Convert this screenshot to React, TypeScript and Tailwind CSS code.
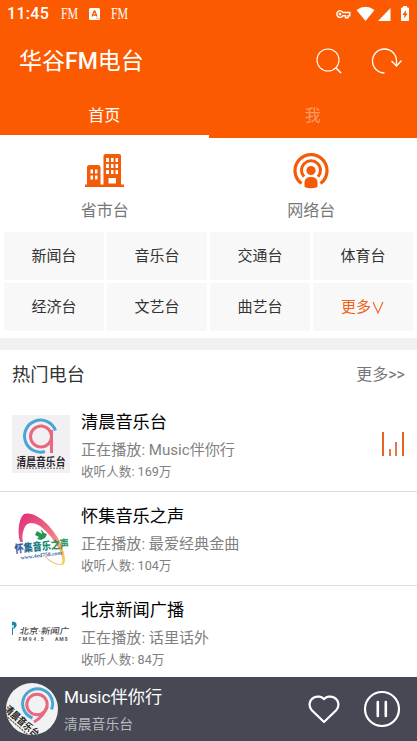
const categories = ["新闻台", "音乐台", "交通台", "体育台", "经济台", "文艺台", "曲艺台", "更多"]

const stations = [
  { name: "清晨音乐台", playing: "Music伴你行", listeners: "169万", logo: <MorningLogo />, active: true },
  { name: "怀集音乐之声", playing: "最爱经典金曲", listeners: "104万", logo: <HuaijiLogo />, active: false },
  { name: "北京新闻广播", playing: "话里话外", listeners: "84万", logo: <BeijingLogo />, active: false },
]

function MorningLogo() {
  return (
    <svg viewBox="0 0 58 58" className="h-[58px] w-[58px]">
      <rect width="58" height="58" fill="#f3f0f4" />
      <path d="M43.5 15.5A16 16 0 1 0 33 36.5" fill="none" stroke="#49a5d4" strokeWidth="3" />
      <circle cx="29" cy="21.5" r="10.5" fill="none" stroke="#e7687f" strokeWidth="3" />
      <path d="M39.5 15v23" stroke="#e7687f" strokeWidth="3" />
      <g transform="translate(4.5 51) scale(1 1.15)">
        <text fontSize="9.8" fontWeight="700" fill="#292529">
          清晨音乐台
        </text>
      </g>
      <path d="M5 53.2h48" stroke="#5c575c" strokeWidth="1" strokeDasharray="2 1" />
    </svg>
  )
}

function HuaijiLogo() {
  return (
    <svg viewBox="0 0 58 58" className="h-[58px] w-[58px]">
      <defs>
        <linearGradient id="swoosh" x1="0" y1="0" x2="1" y2="1">
          <stop offset="0" stopColor="#dd2b79" />
          <stop offset=".55" stopColor="#ef7687" />
          <stop offset="1" stopColor="#f5dc4e" />
        </linearGradient>
        <linearGradient id="name" x1="0" y1="0" x2="1" y2="0">
          <stop offset="0" stopColor="#3d55a8" />
          <stop offset=".5" stopColor="#168579" />
          <stop offset="1" stopColor="#3b9c50" />
        </linearGradient>
      </defs>
      <path
        d="M8 33C5 22 7 9 12 5C24 1 42 19 49 35C54 48 55 57 48 56C42 56 35 51 31 45C39 53 47 57 50 54C53 47 41 27 28 17C20 12 14 13 12 20C10 25 10 29 11 33Z"
        fill="url(#swoosh)"
      />
      <path d="M25 22l5 3-1-5 3 4 3 1-2 4-4 2-4-1 2-2-4-2z" fill="#239552" />
      <g transform="translate(3 44) rotate(-6) scale(1 1.2)">
        <text fontSize="9.1" fontWeight="900" fill="url(#name)">
          怀集音乐之声
        </text>
      </g>
      <g transform="translate(9 50.500) rotate(-7)">
        <text fontSize="5.600" fontFamily="Liberation Serif" fontWeight="700" fill="#3e64a3">
          www.4ed758.com
        </text>
      </g>
    </svg>
  )
}

function BeijingLogo() {
  return (
    <svg viewBox="0 0 58 58" className="h-[58px] w-[58px]">
      <path d="M0 19c5-1 6 4 3 6l-2 1v6H0z" fill="#1588a7" />
      <path d="M0 22h2v3H0z" fill="#a5dce6" />
      <g transform="translate(7 31) skewX(-10) scale(1 .9)">
        <text fontSize="9.400" fontWeight="500" fill="#4b4a4e">
          北京·新闻广
        </text>
      </g>
      <text x="6.500" y="38" fontSize="5" fontWeight="700" letterSpacing="1.600" fill="#555">
        FM94.5
      </text>
      <text x="43" y="38" fontSize="5" fontWeight="700" letterSpacing="1" fill="#555">
        AM8
      </text>
    </svg>
  )
}

function PlayerAvatar() {
  return (
    <svg viewBox="0 0 52 52" className="h-[52px] w-[52px] rounded-full">
      <rect width="52" height="52" fill="#f2f2f3" />
      <path d="M45.500 26.500A15 15 0 1 0 26.500 35" fill="none" stroke="#49a5d4" strokeWidth="3" />
      <circle cx="31" cy="21.500" r="10.200" fill="none" stroke="#e7687f" strokeWidth="3" />
      <path d="M41 23.500Q38 33 28 39" fill="none" stroke="#e7687f" strokeWidth="3" />
      <g transform="translate(0 24.500) rotate(41) scale(1 1.200)">
        <text fontSize="8.400" fontWeight="700" fill="#211f21" y="3">
          清晨音乐台
        </text>
        <path d="M2 5.200h38" stroke="#555" strokeWidth="1" strokeDasharray="2 1" />
      </g>
    </svg>
  )
}

function StatusBar() {
  return (
    <div className="flex h-7 items-center pr-2 pl-[7px]">
      <span className="w-[54px] text-[16px] leading-none font-medium tracking-[.3px]">11:45</span>
      <span className="w-[28px] origin-left scale-x-[.72] font-['Liberation_Serif',serif] text-[16.5px] leading-none">FM</span>
      <svg viewBox="0 0 11 12" className="h-3 w-[11px]">
        <rect width="11" height="12" rx="1.5" fill="#fff" />
        <path d="M3 8.5 5.2 3h.6L8 8.5M3.8 7h3.4" fill="none" stroke="#fa5b00" strokeWidth="1.3" />
        <path d="M7.5 10.3h2" stroke="#fa5b00" strokeWidth=".7" />
      </svg>
      <span className="ml-[11px] origin-left scale-x-[.72] font-['Liberation_Serif',serif] text-[16.5px] leading-none">FM</span>
      <svg viewBox="0 0 74 16" className="ml-auto h-4 w-[74px]" fill="#fff">
        <g fill="none" stroke="#fff" strokeWidth="1.4">
          <path d="M8 6.500A3.300 3.300 0 1 0 8 9.700H10.500v2h2.500v-2h1.800V6.500z" />
          <circle cx="5" cy="8.100" r=".7" />
        </g>
        <path d="M21.500 4Q30.500-2.300 39.500 4L30.500 15z" />
        <path d="M55.500 2v13H43z" />
        <path d="M68 0h4v1.500h1q1 0 1 1V14q0 1-1 1h-6q-1 0-1-1V2.500q0-1 1-1h1z" />
        <path d="M70.800 4v3.500h1.800L69.300 12.500V9h-1.800z" fill="#fa5b00" />
      </svg>
    </div>
  )
}

export default function App() {
  return (
    <div className="flex h-[741px] w-[417px] flex-col overflow-hidden bg-white font-[Roboto,'Noto_Sans_CJK_SC',sans-serif] whitespace-nowrap">
      <header className="h-[138px] shrink-0 bg-[#fb5a00] text-white">
        <StatusBar />
        <div className="flex h-[66px] items-center pl-[19px]">
          <h1 className="text-[23px] leading-none">
            华谷<span className="font-medium">FM</span>电台
          </h1>
          <svg viewBox="0 0 26 26" className="mr-[29px] ml-auto h-[26px] w-[26px]" fill="none" stroke="#fff">
            <circle cx="12" cy="12" r="11" strokeWidth="1.1" />
            <path d="m19.500 19.500 5.500 5.500" strokeWidth="1.7" />
          </svg>
          <svg viewBox="0 0 31 26" className="mr-[15px] h-[26px] w-[31px]" fill="none" stroke="#fff" strokeWidth="1.3">
            <path d="M13.500 25A12 12 0 1 1 25.500 13v4.500" />
            <path d="m20.500 13 5 5 5-5.500" />
          </svg>
        </div>
        <nav className="grid h-11 grid-cols-2 text-center text-[16px] leading-[43px]">
          <div className="h-[44px] border-b-[3px] border-white">首页</div>
          <div className="text-[#ff9b66]">我</div>
        </nav>
      </header>

      <section className="grid h-[93px] shrink-0 grid-cols-2 text-[16px] text-[#777]">
        <div className="flex flex-col items-center pt-4 pl-px">
          <svg viewBox="0 0 39 34" className="h-[34px] w-[39px]" fill="#f45b08">
            <path d="M0 30.500h2V13.500Q2 11 4.500 11H13q2.500 0 2.500 2.500v17h3V2Q18.500 0 20.500 0H34q2 0 2 2v28.500h3V33H0z" />
            <path
              d="M5.500 15.500H8v4H5.500zM10 15.500h2.500v4H10zM5.500 21.500H8v4H5.500zM10 21.500h2.500v4H10zM21 4h3v4h-3zM26 4h2.500v4H26zM30.500 4H33v4h-2.500zM21 10h3v4h-3zM26 10h2.500v4H26zM30.500 10H33v4h-2.500zM21 16h3v4h-3zM26 16h2.500v4H26zM30.500 16H33v4h-2.500zM23.500 24h7.500v5.500h-7.500z"
              fill="#fff"
            />
          </svg>
          <span className="mt-[11px] leading-6">省市台</span>
        </div>
        <div className="flex flex-col items-center pt-[15px] pr-[3px]">
          <svg viewBox="0 0 36 36" className="h-[36px] w-[36px]" fill="none" stroke="#f45b08">
            <path d="M8.500 30.500A16 16 0 1 1 27.500 30.500" strokeWidth="3.200" />
            <path d="M11 23.700A9.500 9.500 0 1 1 25 23.700" strokeWidth="3" />
            <circle cx="18" cy="17.500" r="4.600" fill="#f45b08" stroke="none" />
            <path d="M11.500 34v-4.500q0-5.500 6.500-5.500t6.500 5.500v4.500q-6.500 2.500-13 0z" fill="#f45b08" stroke="none" />
          </svg>
          <span className="mt-[10px] leading-6">网络台</span>
        </div>
      </section>

      <section className="grid h-[107px] shrink-0 grid-cols-4 content-start gap-[3px] px-1 pt-[.5px]">
        {categories.map((label) => (
          <div
            key={label}
            className={`flex h-[48px] items-center justify-center bg-[#f8f8f8] pt-0.5 text-[15px] ${label === "更多" ? "text-[#ee6319]" : "text-[#333]"}`}
          >
            {label}
            {label === "更多" && (
              <svg viewBox="0 0 14 14" className="h-[14px] w-[14px]" fill="none" stroke="currentColor" strokeWidth="1.100">
                <path d="m2 1 5 11 5-11" />
              </svg>
            )}
          </div>
        ))}
      </section>
      <div className="h-3 shrink-0 bg-[#f1f1f1]" />

      <div className="flex h-[48px] shrink-0 items-center justify-between px-3 pt-px">
        <h2 className="text-[18.300px] text-[#333]">热门电台</h2>
        <span className="text-[16px] text-[#777]">更多&gt;&gt;</span>
      </div>

      <main className="min-h-0 flex-1 overflow-hidden">
        {stations.map((s) => (
          <div key={s.name} className="flex h-[94.200px] border-b border-[#dedede] pt-[11px] pr-[13px] pl-3">
            <div className="mt-[6px] h-[58px] w-[58px]">{s.logo}</div>
            <div className="ml-[11px] flex-1">
              <h3 className="text-[17.200px] leading-[26px] text-black">{s.name}</h3>
              <p className="mt-[3px] text-[15.100px] leading-6 text-[#808080]">正在播放: {s.playing}</p>
              <p className="mt-px text-[12.600px] leading-[18px] text-[#808080]">收听人数: {s.listeners}</p>
            </div>
            {s.active && (
              <div className="mt-[23px] flex h-6 items-end gap-[4.700px]">
                <i className="h-6 w-0.5 bg-[#e96525]" />
                <i className="h-[7px] w-0.5 bg-[#e07a48]" />
                <i className="h-[14px] w-0.5 bg-[#e07a48]" />
                <i className="h-6 w-0.5 bg-[#e96525]" />
              </div>
            )}
          </div>
        ))}
      </main>

      <footer className="flex h-16 shrink-0 items-center bg-[#464853] pr-4 pl-1.5">
        <PlayerAvatar />
        <div className="ml-1.5 flex-1 pt-px">
          <p className="text-[17.200px] leading-[26px] text-white">Music伴你行</p>
          <p className="mt-0.5 text-[13.800px] leading-6 text-[#b9bac0]">清晨音乐台</p>
        </div>
        <svg viewBox="0 0 32 28" className="mr-[23px] h-7 w-8" fill="none" stroke="#fff" strokeWidth="2.200" strokeLinejoin="round">
          <path d="M16 27 3.800 15.300C.2 11.500 1.200 5 5.500 2.700 9.500.6 14 1.500 16 4.200 18 1.500 22.500.6 26.500 2.700 30.800 5 31.800 11.500 28.200 15.300z" />
        </svg>
        <svg viewBox="0 0 38 38" className="h-[38px] w-[38px]" fill="none" stroke="#fff">
          <circle cx="19" cy="19" r="17" strokeWidth="2.200" />
          <path d="M14.800 12v14M22.800 12v14" strokeWidth="2.600" strokeLinecap="round" />
        </svg>
      </footer>
    </div>
  )
}
